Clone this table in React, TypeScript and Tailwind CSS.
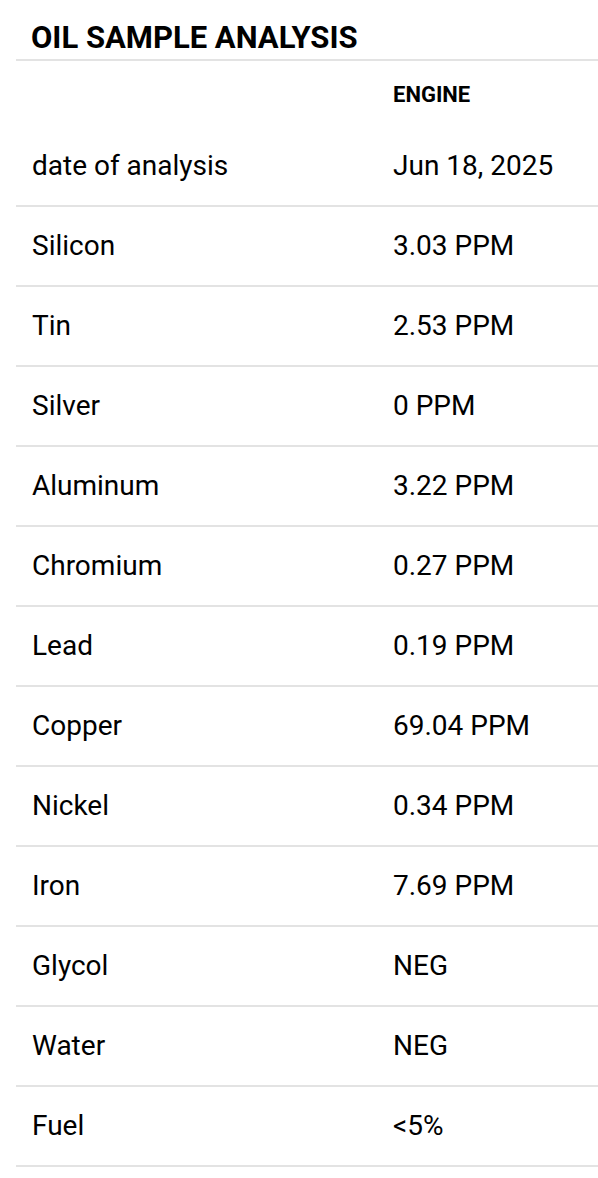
const rows: [string, string][] = [
  ["date of analysis", "Jun 18, 2025"],
  ["Silicon", "3.03 PPM"],
  ["Tin", "2.53 PPM"],
  ["Silver", "0 PPM"],
  ["Aluminum", "3.22 PPM"],
  ["Chromium", "0.27 PPM"],
  ["Lead", "0.19 PPM"],
  ["Copper", "69.04 PPM"],
  ["Nickel", "0.34 PPM"],
  ["Iron", "7.69 PPM"],
  ["Glycol", "NEG"],
  ["Water", "NEG"],
  ["Fuel", "<5%"],
];

const App = () => {
  return (
    <div className="min-h-screen bg-white pl-[16px] text-black" style={{ fontFamily: "Roboto, 'Liberation Sans', sans-serif" }}>
      <h2 className="border-b-2 border-[#e3e3e3] pt-[20px] pb-[3px] pl-[15px] text-[31px] leading-[36px] font-bold">
        OIL SAMPLE ANALYSIS
      </h2>
      <div className="grid grid-cols-[361px_1fr]">
        <div className="h-[66px]"></div>
        <div className="flex h-[66px] items-center px-[16px] text-[22px] font-bold">ENGINE</div>
        {rows.map(([label, value]) => (
          <div key={label} className="col-span-2 grid h-[80px] grid-cols-[361px_1fr] items-center border-b-2 border-[#e3e3e3] text-[28px]">
            <div className="px-[16px]">{label}</div>
            <div className="px-[16px]">{value}</div>
          </div>
        ))}
      </div>
    </div>
  );
};

export default App;
